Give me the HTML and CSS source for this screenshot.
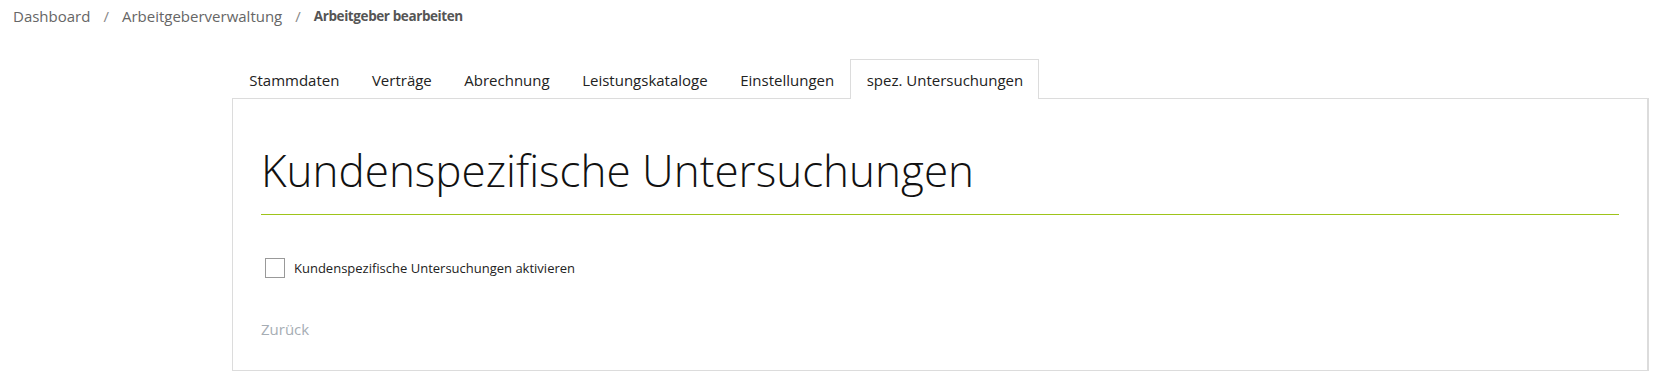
FILE: index.html
```html
<!DOCTYPE html>
<html lang="de">

<head>
    <meta charset="UTF-8">
    <meta name="viewport" content="width=device-width, initial-scale=1.0">
    <title>Arbeitgeber bearbeiten</title>
    <link rel="stylesheet" href="styles.css">
</head>

<body>

    <nav class="breadcrumb">
        <a href="#">Dashboard</a>
        <span class="sep">/</span>
        <a href="#">Arbeitgeberverwaltung</a>
        <span class="sep">/</span>
        <strong>Arbeitgeber bearbeiten</strong>
    </nav>

    <div class="editor">
        <ul class="tabs">
            <li><a href="#">Stammdaten</a></li>
            <li><a href="#">Verträge</a></li>
            <li><a href="#">Abrechnung</a></li>
            <li><a href="#">Leistungskataloge</a></li>
            <li><a href="#">Einstellungen</a></li>
            <li class="active"><a href="#">spez. Untersuchungen</a></li>
        </ul>

        <section class="panel">
            <h1 class="panel-title">Kundenspezifische Untersuchungen</h1>

            <label class="check" for="activate">
                <input type="checkbox" id="activate">
                <span class="box"></span>
                Kundenspezifische Untersuchungen aktivieren
            </label>

            <a class="back" href="#">Zurück</a>
        </section>
    </div>

</body>

</html>
```

FILE: styles.css
```css
body {
    font-family: "Open Sans", "Noto Sans", sans-serif;
    background-color: #ffffff;
    color: #222;
    margin: 0;
    padding: 0;
}

a {
    text-decoration: none;
    color: inherit;
}

.breadcrumb {
    display: flex;
    align-items: center;
    gap: 13px;
    height: 32px;
    padding-left: 13px;
    font-size: 15px;
    color: #666;
}

.breadcrumb .sep {
    color: #888;
}

.breadcrumb strong {
    color: #555;
    font-weight: 700;
    font-size: 13.5px;
    letter-spacing: -0.4px;
}

.editor {
    margin: 27px 5px 0 232px;
}

.tabs {
    display: flex;
    list-style: none;
    margin: 0 0 -1px 1px;
    padding: 0;
    position: relative;
}

.tabs li a {
    display: block;
    height: 38px;
    line-height: 40px;
    padding: 0 15.25px;
    border: 1px solid transparent;
    border-bottom: none;
    font-size: 15px;
    color: #222;
}

.tabs li.active a {
    border-color: #dcdcdc;
    background-color: #fff;
    height: 39px;
}

.panel {
    box-sizing: border-box;
    height: 273px;
    border: 1px solid #dcdcdc;
    border-right-width: 2px;
    padding: 44px 28px 0 28px;
}

.panel-title {
    font-weight: 300;
    font-size: 44px;
    line-height: 54px;
    margin: 0;
    padding-bottom: 17px;
    border-bottom: 1px solid #9ec41a;
    color: #111;
}

.check {
    display: flex;
    align-items: center;
    gap: 9px;
    margin-top: 43px;
    margin-left: 4px;
    font-size: 13px;
    color: #222;
    cursor: pointer;
}

.check input {
    display: none;
}

.check .box {
    width: 18px;
    height: 18px;
    border: 1px solid #999;
}

.back {
    display: inline-block;
    margin-top: 41px;
    font-size: 15px;
    color: #a6adb4;
}
```
